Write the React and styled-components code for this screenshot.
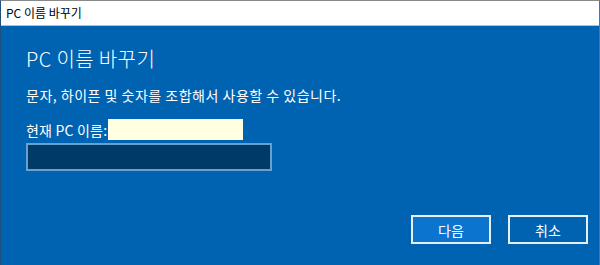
import styled, { createGlobalStyle } from 'styled-components';

const GlobalStyle = createGlobalStyle`
  html, body {
    margin: 0;
    padding: 0;
    background: #0063b1;
  }
  body {
    font-family: "Noto Sans CJK KR", "Noto Sans", sans-serif;
  }
`;

export default function App() {
  return (
    <>
      <GlobalStyle />
      <Window>
        <TitleBar>PC 이름 바꾸기</TitleBar>
        <Body>
          <Heading>PC 이름 바꾸기</Heading>
          <Description>문자, 하이픈 및 숫자를 조합해서 사용할 수 있습니다.</Description>
          <CurrentRow>
            <span>현재 PC 이름:</span>
            <Masked />
          </CurrentRow>
          <NameInput type="text" />
          <Footer>
            <Button $primary>다음</Button>
            <Button>취소</Button>
          </Footer>
        </Body>
      </Window>
    </>
  );
}

const Window = styled.div`
  width: 600px;
  height: 265px;
  box-sizing: border-box;
  display: flex;
  flex-direction: column;
  border-top: 1px solid #8a8a8a;
  border-left: 1px solid #1f4f7f;
  border-right: 1px solid #3a7ab8;
  overflow: hidden;
`;

const TitleBar = styled.div`
  height: 24px;
  flex: 0 0 24px;
  background: #ffffff;
  border-bottom: 1px solid #9cc6ea;
  color: #000;
  font-size: 12px;
  line-height: 24px;
  padding-left: 5px;
`;

const Body = styled.div`
  flex: 1;
  background: #0063b1;
  color: #ffffff;
  padding: 18px 0 0 25px;
  display: flex;
  flex-direction: column;
`;

const Heading = styled.h1`
  margin: 0;
  font-size: 20px;
  font-weight: 300;
  line-height: 30px;
  letter-spacing: 0.4px;
`;

const Description = styled.p`
  margin: 11px 0 0;
  font-size: 14px;
  line-height: 20px;
  letter-spacing: 0.5px;
`;

const CurrentRow = styled.div`
  margin-top: 14px;
  display: flex;
  align-items: center;
  font-size: 14px;
  line-height: 20px;
  letter-spacing: 0.2px;
`;

const Masked = styled.div`
  width: 135px;
  height: 21px;
  background: #ffffe1;
  margin-left: 1px;
`;

const NameInput = styled.input`
  margin-top: 3px;
  width: 246px;
  height: 28px;
  box-sizing: border-box;
  background: #003a66;
  border: 2px solid #6a9fd0;
  outline: none;
  color: #fff;
`;

const Footer = styled.div`
  margin-top: 44px;
  display: flex;
  justify-content: flex-end;
  gap: 17px;
  padding-right: 11px;
`;

const Button = styled.button`
  width: 80px;
  height: 29px;
  box-sizing: border-box;
  background: ${({ $primary }) => ($primary ? '#0a74cf' : '#0063b1')};
  border: 2px solid #e6eef6;
  color: #ffffff;
  font-family: inherit;
  font-size: 14px;
  padding: 0;
`;
